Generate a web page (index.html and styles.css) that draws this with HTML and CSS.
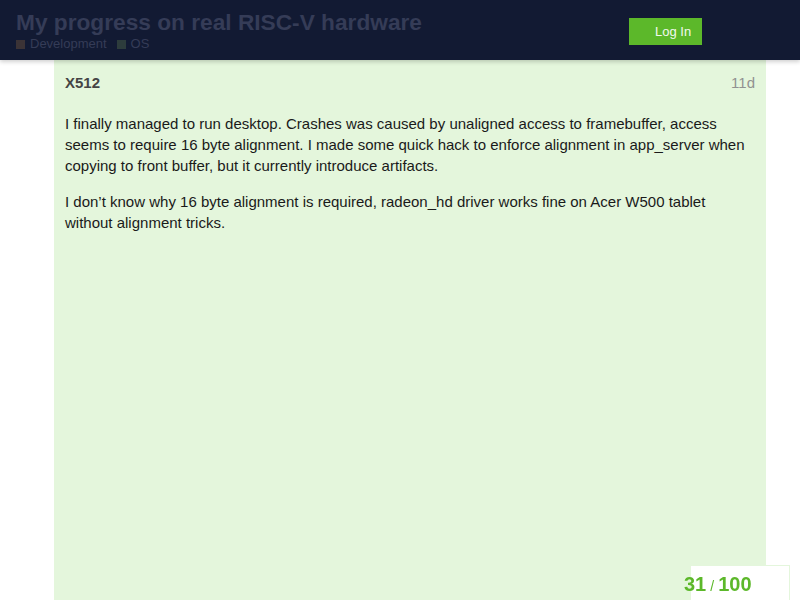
FILE: index.html
```html
<!DOCTYPE html>
<html lang="en">
<head>
<meta charset="utf-8">
<title>My progress on real RISC-V hardware</title>
<link rel="stylesheet" href="styles.css">
</head>
<body>
<header class="site-header">
  <div class="topic-info">
    <h1 class="topic-title">My progress on real RISC-V hardware</h1>
    <div class="categories">
      <span class="cat"><span class="cat-box cat-dev"></span>Development</span>
      <span class="cat"><span class="cat-box cat-os"></span>OS</span>
    </div>
  </div>
  <button class="login-btn">Log In</button>
</header>
<main class="post">
  <div class="post-meta">
    <span class="username">X512</span>
    <span class="age">11d</span>
  </div>
  <div class="cooked">
    <p>I finally managed to run desktop. Crashes was caused by unaligned access to framebuffer, access seems to require 16 byte alignment. I made some quick hack to enforce alignment in app_server when copying to front buffer, but it currently introduce artifacts.</p>
    <p>I don’t know why 16 byte alignment is required, radeon_hd driver works fine on Acer W500 tablet without alignment tricks.</p>
  </div>
</main>
<div class="progress">
  <span class="progress-text"><strong>31</strong><span class="slash">/</span><strong>100</strong></span>
</div>
</body>
</html>
```
FILE: styles.css
```css
html, body {
  margin: 0;
  padding: 0;
  height: 100%;
  background: #ffffff;
  font-family: "Liberation Sans", Arial, sans-serif;
  overflow: hidden;
}

.site-header {
  position: relative;
  z-index: 2;
  height: 60px;
  box-sizing: border-box;
  background: #121a33;
  box-shadow: 0 2px 4px rgba(0, 0, 0, 0.18);
  display: flex;
  align-items: flex-start;
  justify-content: space-between;
  padding: 0 98px 0 16px;
}

.topic-info {
  padding-top: 9px;
}

.topic-title {
  margin: 0;
  font-size: 22.7px;
  line-height: 27px;
  font-weight: bold;
  color: #353c57;
}

.categories {
  display: flex;
  gap: 10px;
  font-size: 13px;
  line-height: 16px;
  color: #353c57;
}

.cat {
  display: flex;
  align-items: center;
}

.cat-box {
  width: 9px;
  height: 9px;
  margin-right: 5px;
}

.cat-dev { background: #3b3336; }
.cat-os { background: #2d3c3c; }

.login-btn {
  margin-top: 18px;
  height: 27px;
  width: 73px;
  box-sizing: border-box;
  border: 0;
  padding: 0 0 0 26px;
  background: #5cb82a;
  color: #f2f8ee;
  font-family: "Liberation Sans", Arial, sans-serif;
  font-size: 13px;
  text-align: left;
  white-space: nowrap;
}

.post {
  margin: 0 34px 0 54px;
  height: calc(100% - 60px);
  background: #e4f6dc;
  padding: 13px 11px 0 11px;
  box-sizing: border-box;
}

.post-meta {
  display: flex;
  justify-content: space-between;
  font-size: 15px;
  line-height: 20px;
}

.username {
  font-weight: bold;
  color: #444444;
}

.age {
  color: #919191;
}

.cooked {
  margin-top: 20px;
  font-size: 15px;
  line-height: 21px;
  color: #1a1a1a;
}

.cooked p {
  margin: 0 0 15px 0;
}

.progress {
  position: fixed;
  left: 690px;
  top: 565px;
  width: 100px;
  height: 40px;
  box-sizing: border-box;
  background: #ffffff;
  border: 1px solid #e4f6dc;
}

.progress-text {
  display: block;
  margin-left: -7px;
  margin-top: 6px;
  font-size: 20px;
  line-height: 24px;
  color: #5cb82a;
}

.slash {
  font-size: 14px;
  margin: 0 4px;
}
```
